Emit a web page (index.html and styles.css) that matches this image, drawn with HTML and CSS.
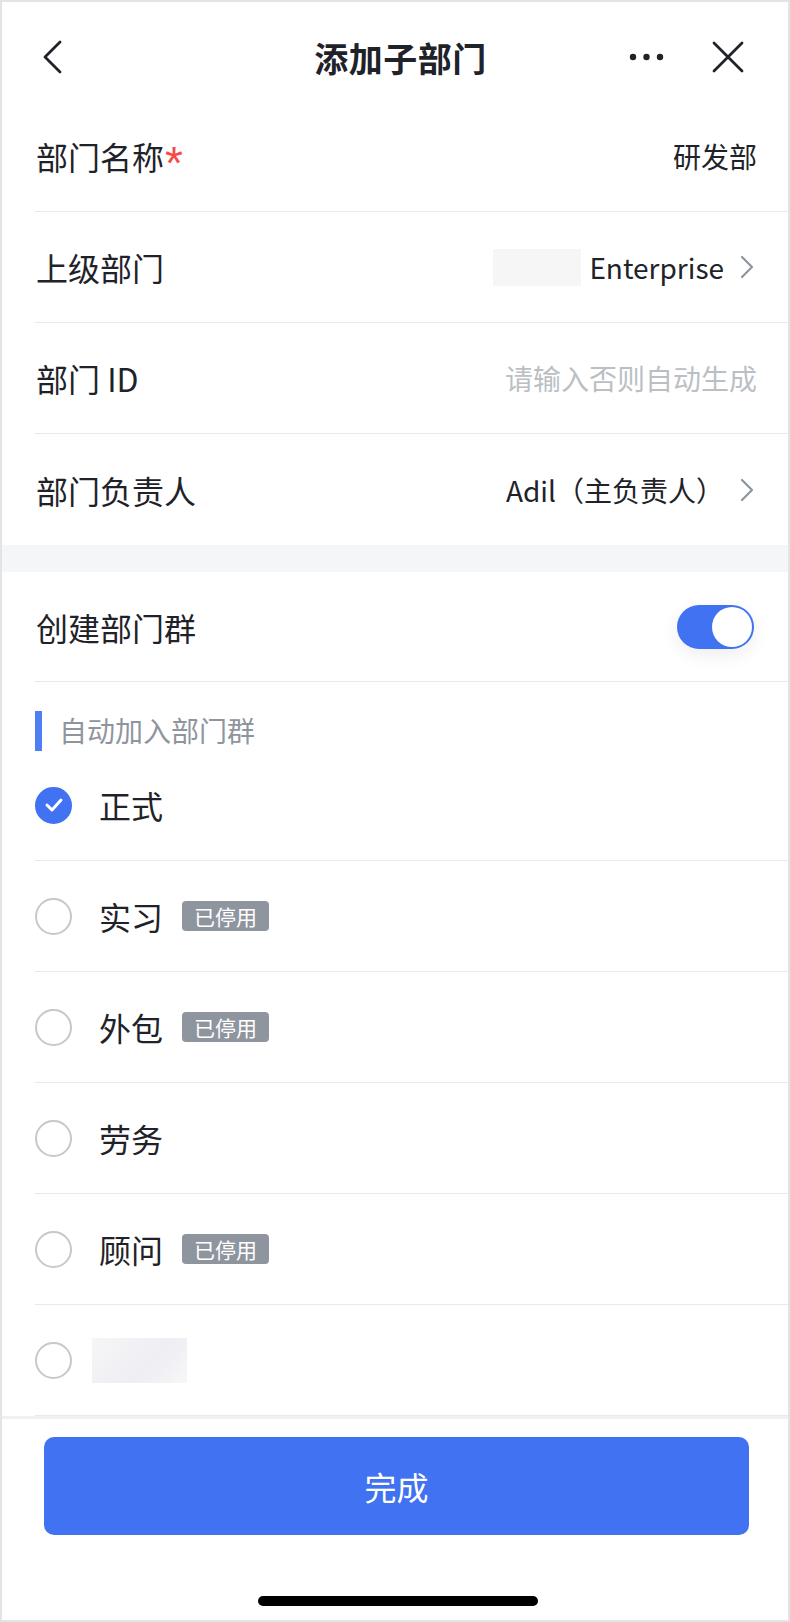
FILE: index.html
```html
<!DOCTYPE html>
<html lang="zh-CN">
<head>
  <meta charset="UTF-8">
  <meta name="viewport" content="width=device-width, initial-scale=1.0">
  <title>添加子部门</title>
  <link rel="stylesheet" href="styles.css">
</head>
<body>
<div class="screen">
  <header class="nav">
    <button class="nav__btn nav__btn--back" aria-label="返回">
      <svg width="20" height="34" viewBox="0 0 20 34"><path d="M18 2 L3 17 L18 32" fill="none" stroke="#1f2329" stroke-width="2.8" stroke-linecap="round" stroke-linejoin="round"/></svg>
    </button>
    <h1 class="nav__title">添加子部门</h1>
    <div class="nav__actions">
      <button class="nav__btn nav__btn--more" aria-label="更多">
        <svg width="36" height="8" viewBox="0 0 36 8"><circle cx="4" cy="4" r="3.2" fill="#1f2329"/><circle cx="17.5" cy="4" r="3.2" fill="#1f2329"/><circle cx="31" cy="4" r="3.2" fill="#1f2329"/></svg>
      </button>
      <button class="nav__btn nav__btn--close" aria-label="关闭">
        <svg width="34" height="34" viewBox="0 0 34 34"><path d="M3 3 L31 31 M31 3 L3 31" fill="none" stroke="#1f2329" stroke-width="2.8" stroke-linecap="round"/></svg>
      </button>
    </div>
  </header>

  <section class="group">
    <div class="row">
      <div class="row__inner">
        <span class="row__label">部门名称<i class="req">*</i></span>
        <span class="row__value">研发部</span>
      </div>
    </div>
    <div class="row">
      <div class="row__inner">
        <span class="row__label">上级部门</span>
        <span class="row__value"><span class="blur blur--org"></span>Enterprise<svg class="chev" width="20" height="24" viewBox="0 0 20 24"><path d="M5 2 L15 12 L5 22" fill="none" stroke="#8f959e" stroke-width="2.2" stroke-linecap="round" stroke-linejoin="round"/></svg></span>
      </div>
    </div>
    <div class="row">
      <div class="row__inner">
        <span class="row__label">部门 ID</span>
        <span class="row__value row__value--placeholder">请输入否则自动生成</span>
      </div>
    </div>
    <div class="row row--last">
      <div class="row__inner">
        <span class="row__label">部门负责人</span>
        <span class="row__value">Adil（主负责人）<svg class="chev" width="20" height="24" viewBox="0 0 20 24"><path d="M5 2 L15 12 L5 22" fill="none" stroke="#8f959e" stroke-width="2.2" stroke-linecap="round" stroke-linejoin="round"/></svg></span>
      </div>
    </div>
  </section>

  <div class="gap"></div>

  <section class="group group--grow">
    <div class="row row--switch">
      <div class="row__inner">
        <span class="row__label">创建部门群</span>
        <span class="switch switch--on"><span class="switch__knob"></span></span>
      </div>
    </div>

    <div class="subhead">
      <span class="subhead__bar"></span>
      <span class="subhead__text">自动加入部门群</span>
    </div>

    <div class="option">
      <div class="option__inner">
        <span class="check check--on">
          <svg width="20" height="16" viewBox="0 0 20 16"><path d="M3 8 L8 13 L17 3" fill="none" stroke="#fff" stroke-width="3" stroke-linecap="round" stroke-linejoin="round"/></svg>
        </span>
        <span class="option__label">正式</span>
      </div>
    </div>
    <div class="option">
      <div class="option__inner">
        <span class="check"></span>
        <span class="option__label">实习</span>
        <span class="tag">已停用</span>
      </div>
    </div>
    <div class="option">
      <div class="option__inner">
        <span class="check"></span>
        <span class="option__label">外包</span>
        <span class="tag">已停用</span>
      </div>
    </div>
    <div class="option">
      <div class="option__inner">
        <span class="check"></span>
        <span class="option__label">劳务</span>
      </div>
    </div>
    <div class="option">
      <div class="option__inner">
        <span class="check"></span>
        <span class="option__label">顾问</span>
        <span class="tag">已停用</span>
      </div>
    </div>
    <div class="option">
      <div class="option__inner">
        <span class="check"></span>
        <span class="blur blur--name"></span>
      </div>
    </div>
  </section>

  <footer class="footer">
    <button class="btn-primary">完成</button>
    <div class="home-bar"></div>
  </footer>
</div>
</body>
</html>
```

FILE: styles.css
```css
* {
  margin: 0;
  padding: 0;
  box-sizing: border-box;
}

body {
  background: #fff;
  font-family: "Noto Sans CJK SC", "Noto Sans", sans-serif;
  color: #1f2329;
}

button {
  font-family: inherit;
  border: none;
  background: none;
  cursor: pointer;
}

.screen {
  width: 790px;
  height: 1622px;
  border: 2px solid #e4e4e4;
  background: #fff;
  display: flex;
  flex-direction: column;
}

/* top bar */
.nav {
  height: 99px;
  padding: 11px 43px 0 40px;
  display: flex;
  align-items: center;
  justify-content: space-between;
}

.nav__btn {
  display: flex;
  align-items: center;
}

.nav__title {
  font-size: 34px;
  font-weight: 700;
  letter-spacing: 0.5px;
  margin-left: 110px;
}

.nav__actions {
  display: flex;
  align-items: center;
  gap: 46px;
}

/* form rows */
.row {
  height: 111px;
  padding-left: 33px;
}

.row__inner {
  height: 100%;
  display: flex;
  align-items: center;
  justify-content: space-between;
  padding-right: 31px;
  padding-left: 1px;
  border-bottom: 1px solid #e8e9eb;
}

.row--last .row__inner {
  border-bottom: none;
}

.row--switch {
  height: 110px;
}

.row__label {
  font-size: 32px;
  display: flex;
  align-items: center;
}

.req {
  font-style: normal;
  font-family: "Liberation Sans", sans-serif;
  color: #f54a45;
  font-size: 46px;
  line-height: 1;
  margin-top: 14px;
  margin-left: 1px;
}

.row__value {
  font-size: 28px;
  display: flex;
  align-items: center;
  white-space: pre;
}

.row__value--placeholder {
  color: #bbbfc4;
}

.chev {
  margin-left: 13px;
}

.blur {
  display: inline-block;
  background: #f6f6f7;
}

.blur--org {
  width: 88px;
  height: 37px;
  margin-right: 8px;
}

.blur--name {
  width: 95px;
  height: 45px;
  margin-left: 20px;
  background: linear-gradient(135deg, #f6f6f8, #eeeef3 60%, #f7f7f9);
}

.gap {
  height: 27px;
  background: #f5f6f7;
}

/* toggle */
.switch {
  width: 77px;
  height: 44px;
  border-radius: 22px;
  background: #4172f2;
  padding: 2px;
  display: flex;
  justify-content: flex-end;
  box-shadow: 0 6px 18px rgba(0, 0, 0, 0.07);
  margin-right: 3px;
}

.switch__knob {
  width: 40px;
  height: 40px;
  border-radius: 50%;
  background: #fff;
}

/* group checkboxes */
.subhead {
  height: 68px;
  padding: 29px 0 0 33px;
  display: flex;
  align-items: flex-start;
}

.subhead__bar {
  width: 7px;
  height: 40px;
  background: #4e7ff5;
}

.subhead__text {
  font-size: 28px;
  color: #8f959e;
  margin-left: 17px;
  line-height: 38px;
}

.option {
  height: 111px;
  padding-left: 33px;
}

.option__inner {
  height: 100%;
  display: flex;
  align-items: center;
  border-bottom: 1px solid #e8e9eb;
}

.check {
  width: 37px;
  height: 37px;
  border-radius: 50%;
  border: 2.5px solid #c6c8cc;
  display: flex;
  align-items: center;
  justify-content: center;
  flex-shrink: 0;
}

.check--on {
  background: #4172f2;
  border-color: #4172f2;
}

.option__label {
  font-size: 32px;
  margin-left: 27px;
}

.tag {
  margin-left: 19px;
  height: 30px;
  padding: 0 12px;
  border-radius: 4px;
  background: #8f959e;
  color: #fff;
  font-size: 21px;
  line-height: 30px;
}

/* bottom */
.footer {
  flex: 1;
  border-top: 3px solid #f0f1f2;
  display: flex;
  flex-direction: column;
  align-items: center;
}

.btn-primary {
  margin-top: 18px;
  align-self: stretch;
  margin-left: 42px;
  margin-right: 39px;
  height: 98px;
  border-radius: 10px;
  background: #4172f2;
  color: #fff;
  font-size: 32px;
}

.home-bar {
  margin-top: 61px;
  margin-left: 6px;
  width: 280px;
  height: 10px;
  border-radius: 5px;
  background: #000;
}
```
